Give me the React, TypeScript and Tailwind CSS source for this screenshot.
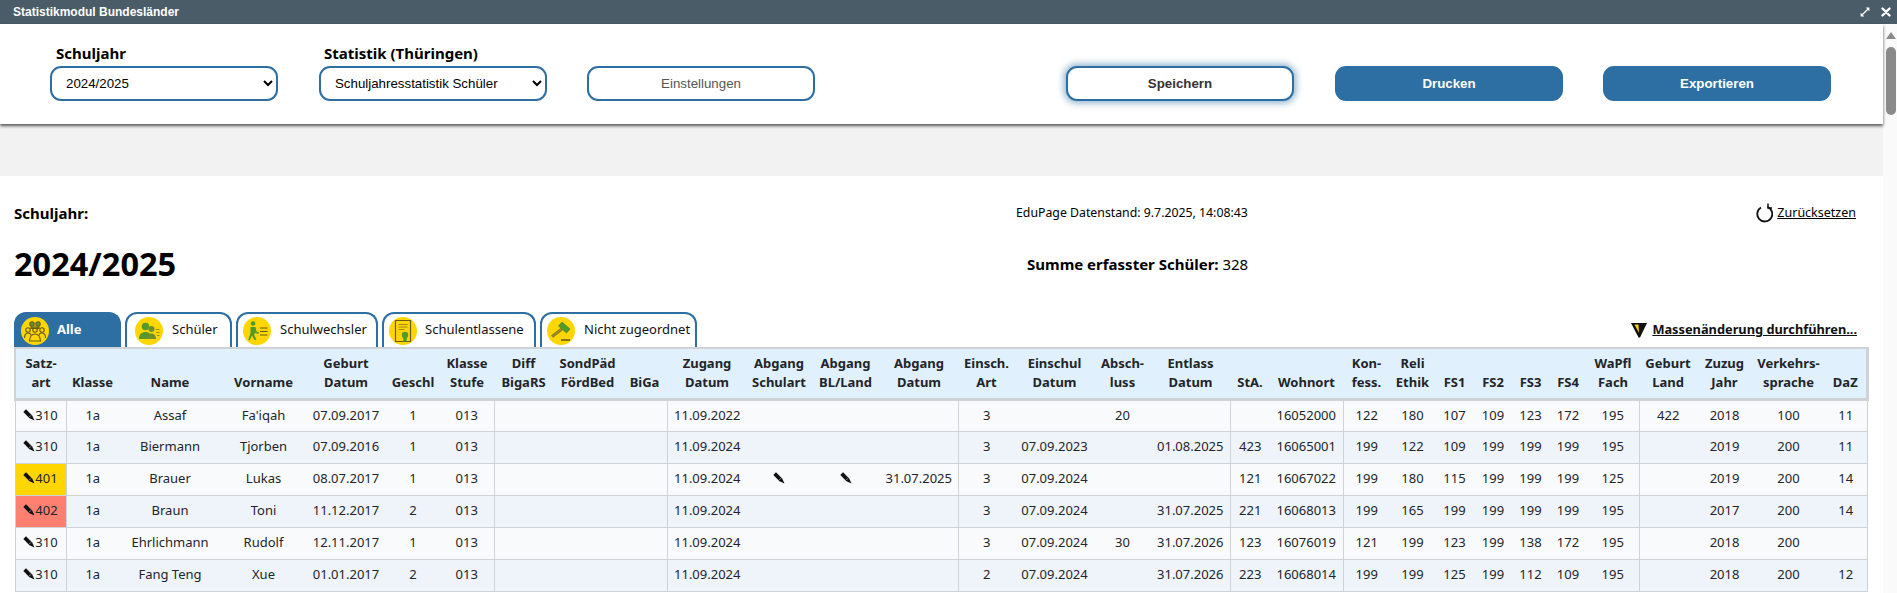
import type { ReactNode } from 'react'

type Row = { cells: string[]; mark?: 'yellow' | 'red' }

const BLUE = 'border-[#2e6fa3]'

const colWidths = [
  'w-[51px]', 'w-[53px]', 'w-[102px]', 'w-[85px]', 'w-[80px]', 'w-[54px]', 'w-[54px]', 'w-[59px]',
  'w-[69px]', 'w-[45px]', 'w-[80px]', 'w-[64px]', 'w-[69px]', 'w-[78px]', 'w-[57px]', 'w-[79px]',
  'w-[57px]', 'w-[79px]', 'w-[40px]', 'w-[73px]', 'w-[47px]', 'w-[45px]', 'w-[39px]', 'w-[38px]',
  'w-[37px]', 'w-[38px]', 'w-[52px]', 'w-[58px]', 'w-[55px]', 'w-[73px]', 'w-[42px]',
]

const headers = [
  ['Satz-', 'art'], ['', 'Klasse'], ['', 'Name'], ['', 'Vorname'], ['Geburt', 'Datum'], ['', 'Geschl'],
  ['Klasse', 'Stufe'], ['Diff', 'BigaRS'], ['SondPäd', 'FördBed'], ['', 'BiGa'], ['Zugang', 'Datum'],
  ['Abgang', 'Schulart'], ['Abgang', 'BL/Land'], ['Abgang', 'Datum'], ['Einsch.', 'Art'], ['Einschul', 'Datum'],
  ['Absch-', 'luss'], ['Entlass', 'Datum'], ['', 'StA.'], ['', 'Wohnort'], ['Kon-', 'fess.'], ['Reli', 'Ethik'],
  ['', 'FS1'], ['', 'FS2'], ['', 'FS3'], ['', 'FS4'], ['WaPfl', 'Fach'], ['Geburt', 'Land'], ['Zuzug', 'Jahr'],
  ['Verkehrs-', 'sprache'], ['', 'DaZ'],
]

// columns that start with a vertical rule in the body
const ruled = [1, 7, 10, 14, 18, 20, 27]

const rows: Row[] = [
  { cells: ['310', '1a', 'Assaf', "Fa'iqah", '07.09.2017', '1', '013', '', '', '', '11.09.2022', '', '', '', '3', '', '20', '', '', '16052000', '122', '180', '107', '109', '123', '172', '195', '422', '2018', '100', '11'] },
  { cells: ['310', '1a', 'Biermann', 'Tjorben', '07.09.2016', '1', '013', '', '', '', '11.09.2024', '', '', '', '3', '07.09.2023', '', '01.08.2025', '423', '16065001', '199', '122', '109', '199', '199', '199', '195', '', '2019', '200', '11'] },
  { mark: 'yellow', cells: ['401', '1a', 'Brauer', 'Lukas', '08.07.2017', '1', '013', '', '', '', '11.09.2024', 'pen', 'pen', '31.07.2025', '3', '07.09.2024', '', '', '121', '16067022', '199', '180', '115', '199', '199', '199', '125', '', '2019', '200', '14'] },
  { mark: 'red', cells: ['402', '1a', 'Braun', 'Toni', '11.12.2017', '2', '013', '', '', '', '11.09.2024', '', '', '', '3', '07.09.2024', '', '31.07.2025', '221', '16068013', '199', '165', '199', '199', '199', '199', '195', '', '2017', '200', '14'] },
  { cells: ['310', '1a', 'Ehrlichmann', 'Rudolf', '12.11.2017', '1', '013', '', '', '', '11.09.2024', '', '', '', '3', '07.09.2024', '30', '31.07.2026', '123', '16076019', '121', '199', '123', '199', '138', '172', '195', '', '2018', '200', ''] },
  { cells: ['310', '1a', 'Fang Teng', 'Xue', '01.01.2017', '2', '013', '', '', '', '11.09.2024', '', '', '', '2', '07.09.2024', '', '31.07.2026', '223', '16068014', '199', '199', '125', '199', '112', '109', '195', '', '2018', '200', '12'] },
]

function Pencil() {
  return (
    <svg viewBox="0 0 12 12" className="inline-block w-3 h-3 align-[-1px]">
      <path d="M.3 3 3 .3 9.200 6.500 11.500 11.500 6.500 9.200Z" fill="#111" />
      <path d="M6.300 8 8 6.300" stroke="#ddd" strokeWidth=".6" />
    </svg>
  )
}

function Badge({ children }: { children: ReactNode }) {
  return (
    <span className="w-7 h-7 rounded-full bg-[#ffd600] flex items-center justify-center shrink-0">
      <svg viewBox="0 0 24 24" className="w-6 h-6">{children}</svg>
    </span>
  )
}

const iconAlle = (
  <g fill="none" stroke="#6b5a14" strokeWidth="1.1">
    <circle cx="9" cy="5" r="2.2" fill="#5c9a3c" />
    <circle cx="15" cy="5" r="2.2" fill="#5c9a3c" />
    <circle cx="5" cy="11" r="2.2" />
    <circle cx="19" cy="11" r="2.2" />
    <circle cx="12" cy="11" r="2.2" />
    <path d="M8 8h8v1.500H8z" fill="#5c9a3c" />
    <path d="M1.500 19c0-3.500 1.500-5 3.500-5s3 1 3 2.500M22.500 19c0-3.500-1.500-5-3.500-5s-3 1-3 2.500" />
    <path d="M6.500 22c0-4 2.500-7 5.500-7s5.500 3 5.500 7z" />
  </g>
)

const iconSchueler = (
  <g>
    <circle cx="8.500" cy="7.500" r="3.800" fill="#55992c" />
    <path d="M2 20c0-5 3-7 6.500-7s6.500 2 6.500 7z" fill="#55992c" />
    <circle cx="14.500" cy="10" r="3" fill="#6f8f2e" />
    <path d="M10 20c0-3.500 2-5.500 4.500-5.500S19 16.500 19 20z" fill="#6f8f2e" />
    <path d="M18.500 10.500h4M19 13.500h3.500M20 16.500h2.500" stroke="#a09020" strokeWidth="1" />
  </g>
)

const iconWechsler = (
  <g>
    <circle cx="8" cy="4.500" r="2.300" fill="#4f9a2e" />
    <path d="M5.500 8h5l1 4.500 2.500 1-.6 1.400-3.400-1.200-.8 2.300 2.300 5h-2l-2.600-4.600-1.900 4.600H3.200l2.300-6.800z" fill="#4f9a2e" />
    <path d="M15 9h7.500M15 12.500h7.500M15 16h7.500" stroke="#6b5a14" strokeWidth="1.200" />
  </g>
)

const iconEntlassene = (
  <g>
    <path d="M4.500 1.500h15v21h-15z" fill="none" stroke="#6b5a14" strokeWidth="1.200" />
    <path d="M7.500 5.500h9M7.500 8h9M7.500 10.500h6" stroke="#a08a20" strokeWidth="1.100" />
    <circle cx="14" cy="16" r="3.200" fill="#4f9a2e" />
    <path d="M12.300 18.500v4.500l1.700-1 1.700 1v-4.500z" fill="#4f9a2e" />
  </g>
)

const iconGavel = (
  <g>
    <path d="M13 3 21 10l-3.500 4L9.500 7z" fill="#4f9a2e" stroke="#3d7a24" strokeWidth=".6" />
    <path d="M11.500 9.500 2.500 16.500l1.500 1.800 9.200-7z" fill="#9a8a30" stroke="#6b5a14" strokeWidth=".6" />
    <path d="M12 21h9" stroke="#6b5a14" strokeWidth="1.600" />
  </g>
)

function Tab({ width, pad, gap, label, active, icon }: { width: string; pad: string; gap: string; label: string; active?: boolean; icon: ReactNode }) {
  return (
    <div
      className={`${width} ${pad} ${gap} h-[35px] rounded-t-[12px] border-2 border-b-0 ${BLUE} flex items-start pt-[3px] text-[13px] ${
        active ? 'bg-[#2e6fa3] text-white font-bold' : 'bg-white text-[#111]'
      }`}
    >
      <Badge>{icon}</Badge>
      <span className="leading-[25px]">{label}</span>
    </div>
  )
}

function Select({ value }: { value: string }) {
  return (
    <select
      defaultValue={value}
      className={`w-[228px] h-[35px] rounded-[11px] border-2 ${BLUE} bg-white pl-[10px] text-[13.3px] text-black font-['Liberation_Sans',sans-serif]`}
    >
      <option>{value}</option>
    </select>
  )
}

function ActionButton({ label, kind }: { label: string; kind: 'plain' | 'focus' | 'solid' }) {
  const look =
    kind === 'solid'
      ? `bg-[#2e6fa3] ${BLUE} text-white font-bold`
      : kind === 'focus'
        ? `bg-white ${BLUE} text-[#333] font-bold shadow-[0_0_7px_2px_rgba(46,111,163,0.55)]`
        : `bg-white ${BLUE} text-[#555]`
  return (
    <button className={`w-[228px] h-[35px] rounded-[11px] border-2 text-[13.3px] font-['Liberation_Sans',sans-serif] ${look}`}>
      {label}
    </button>
  )
}

export default function App() {
  return (
    <div className="w-full h-[593px] overflow-hidden bg-white text-[#212529] font-['Noto_Sans',sans-serif] flex flex-col">
      <div className="h-6 shrink-0 bg-[#495c68] flex items-center pl-[13px] pr-[6px] text-white font-['Liberation_Sans',sans-serif] font-bold text-[12px]">
        <span>Statistikmodul Bundesländer</span>
        <span className="ml-auto flex items-center gap-[11px]">
          <svg viewBox="0 0 10 10" className="w-[10px] h-[10px]">
            <path d="M5.800.6h3.600v3.600L8 2.900 2.900 8l1.300 1.400H.6V5.800L2 7.100 7.100 2z" fill="#fff" />
          </svg>
          <svg viewBox="0 0 10 10" className="w-[10px] h-[10px]">
            <path d="M1.500 1.500l7 7M8.500 1.500l-7 7" stroke="#fff" strokeWidth="2.400" strokeLinecap="round" />
          </svg>
        </span>
      </div>

      <div className="flex-1 flex min-h-0">
        <div className="flex-1 min-w-0">
          <div className="relative h-[100px] bg-white shadow-[0_2px_3px_rgba(0,0,0,0.65)] pl-[50px] pr-[52px] pt-[19px] flex items-end pb-[23px]">
            <div className="flex items-end gap-[40px]">
              <div>
                <div className="pl-[6px] mb-[3px] text-[15px] leading-[20px] font-bold text-black">Schuljahr</div>
                <Select value="2024/2025" />
              </div>
              <div className="ml-[1px]">
                <div className="pl-[5px] mb-[3px] text-[15px] leading-[20px] font-bold text-black">Statistik (Thüringen)</div>
                <Select value="Schuljahresstatistik Schüler" />
              </div>
              <ActionButton label="Einstellungen" kind="plain" />
            </div>
            <div className="ml-auto flex gap-[40px]">
              <div className="mr-[1px]">
                <ActionButton label="Speichern" kind="focus" />
              </div>
              <ActionButton label="Drucken" kind="solid" />
              <ActionButton label="Exportieren" kind="solid" />
            </div>
          </div>
          <div className="h-[52px] bg-[#f2f2f2]" />

          <div className="pl-[14px] pr-[16px]">
            <div className="flex items-center h-[20px] mt-[27px]">
              <span className="w-[1002px] text-[15px] font-bold text-black">Schuljahr:</span>
              <span className="text-[12.3px] text-black">EduPage Datenstand: 9.7.2025, 14:08:43</span>
              <span className="ml-auto flex items-center gap-[4px] pr-[11px] text-[12.5px] text-black">
                <svg viewBox="0 0 18 20" className="w-[18px] h-5" fill="none" stroke="#111" strokeWidth="1.800">
                  <path d="M6 4.500A7.500 7.500 0 1 0 12.500 4" />
                  <path d="M13 .5v4.500h4" strokeWidth="1.500" />
                </svg>
                <span className="underline">Zurücksetzen</span>
              </span>
            </div>
            <div className="flex items-center h-[40px] mt-[21px]">
              <span className="w-[1013px] text-[32.5px] font-bold text-black">2024/2025</span>
              <span className="text-[15px] text-black"><b>Summe erfasster Schüler:</b> 328</span>
            </div>
            <div className="flex items-end mt-[28px] gap-[4px]">
              <Tab width="w-[107px]" pad="pl-[5px]" gap="gap-[8px]" label="Alle" active icon={iconAlle} />
              <Tab width="w-[107px]" pad="pl-[8px]" gap="gap-[9px]" label="Schüler" icon={iconSchueler} />
              <Tab width="w-[142px]" pad="pl-[5px]" gap="gap-[9px]" label="Schulwechsler" icon={iconWechsler} />
              <Tab width="w-[154px]" pad="pl-[5px]" gap="gap-[8px]" label="Schulentlassene" icon={iconEntlassene} />
              <Tab width="w-[157px]" pad="pl-[5px]" gap="gap-[9px]" label="Nicht zugeordnet" icon={iconGavel} />
              <div className="ml-auto pr-[10px] flex items-center gap-[5px] h-[35px] pt-[1px] text-[12.8px] font-bold text-[#111]">
                <svg viewBox="0 0 16 16" className="w-4 h-4">
                  <path d="M0 1h16L9 15.500H7.500z" fill="#111" />
                  <path d="M3.500 2.500h4L8 11z" fill="#ffd600" />
                </svg>
                <span className="underline">Massenänderung durchführen...</span>
              </div>
            </div>

            <table className="table-fixed border-collapse w-[1853px] text-[13px]">
              <colgroup>
                {colWidths.map((w, i) => <col key={i} className={w} />)}
              </colgroup>
              <thead>
                <tr className="bg-[#e1f0fd] border-t-2 border-l-2 border-r-[3px] border-b-[3px] border-[#cfd2d6]">
                  {headers.map((h, i) => (
                    <th key={i} className="h-[51px] p-0 text-center align-middle font-bold leading-[19px] text-[#212529] whitespace-nowrap">
                      <div>{h[0] || '\u00a0'}</div>
                      <div>{h[1]}</div>
                    </th>
                  ))}
                </tr>
              </thead>
              <tbody>
                {rows.map((r, ri) => (
                  <tr key={ri} className={`${ri % 2 === 0 ? 'bg-[#f9fafc]' : 'bg-[#eff4fb]'} border-l border-r border-b border-[#cfd2d6]`}>
                    {r.cells.map((c, ci) => {
                      const markBg = ci === 0 && r.mark === 'yellow' ? 'bg-[#ffd600]' : ci === 0 && r.mark === 'red' ? 'bg-[#ff8070]' : ''
                      return (
                        <td
                          key={ci}
                          className={`h-[32px] p-0 text-center whitespace-nowrap ${ruled.includes(ci) ? 'border-l border-[#cfd2d6]' : ''} ${markBg}`}
                        >
                          {ci === 0 && <Pencil />}
                          {c === 'pen' ? <Pencil /> : c}
                        </td>
                      )
                    })}
                  </tr>
                ))}
              </tbody>
            </table>
          </div>
        </div>

        <div className="w-[14px] shrink-0 bg-[#fafafa] flex flex-col items-end pr-[1px] pt-[8px]">
          <div className="w-0 h-0 border-l-[5px] border-r-[5px] border-b-[7px] border-l-transparent border-r-transparent border-b-[#8a8a8a]" />
          <div className="mt-[8px] w-[10px] h-[68px] rounded-full bg-[#8a8a8a]" />
        </div>
      </div>
    </div>
  )
}
